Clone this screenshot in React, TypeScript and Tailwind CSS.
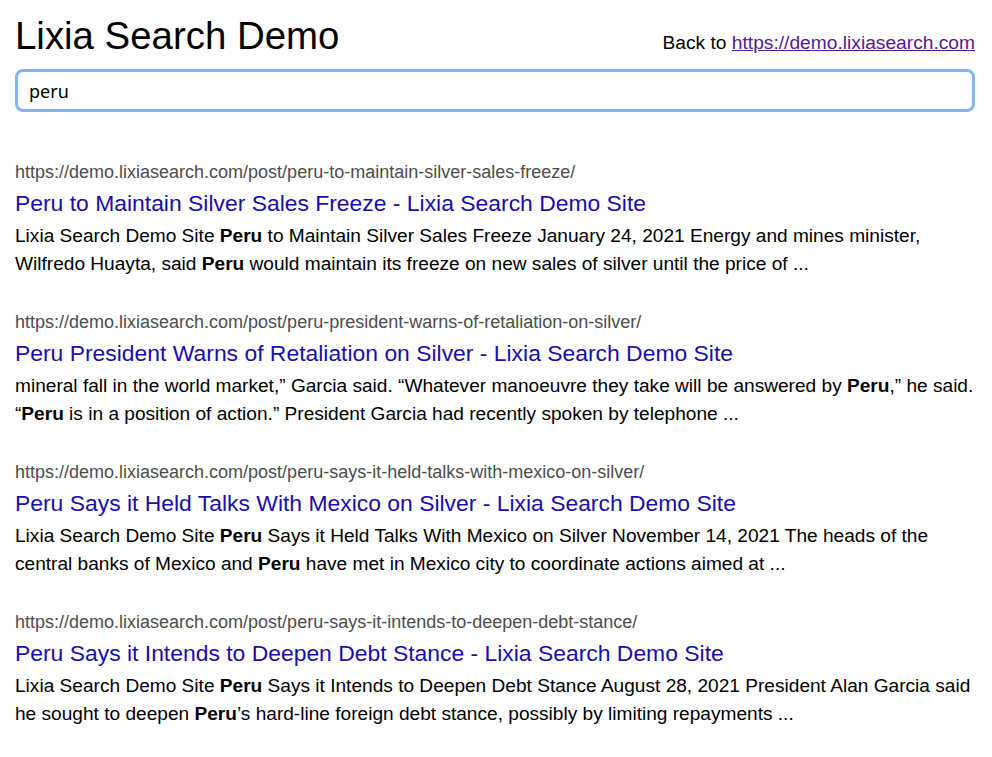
const results = [
  {
    url: "https://demo.lixiasearch.com/post/peru-to-maintain-silver-sales-freeze/",
    title: "Peru to Maintain Silver Sales Freeze - Lixia Search Demo Site",
    snippet: [
      "Lixia Search Demo Site ",
      { b: "Peru" },
      " to Maintain Silver Sales Freeze January 24, 2021 Energy and mines minister, Wilfredo Huayta, said ",
      { b: "Peru" },
      " would maintain its freeze on new sales of silver until the price of ...",
    ],
  },
  {
    url: "https://demo.lixiasearch.com/post/peru-president-warns-of-retaliation-on-silver/",
    title: "Peru President Warns of Retaliation on Silver - Lixia Search Demo Site",
    snippet: [
      "mineral fall in the world market,\u201d Garcia said. \u201cWhatever manoeuvre they take will be answered by ",
      { b: "Peru" },
      ",\u201d he said. \u201c",
      { b: "Peru" },
      " is in a position of action.\u201d President Garcia had recently spoken by telephone ...",
    ],
  },
  {
    url: "https://demo.lixiasearch.com/post/peru-says-it-held-talks-with-mexico-on-silver/",
    title: "Peru Says it Held Talks With Mexico on Silver - Lixia Search Demo Site",
    snippet: [
      "Lixia Search Demo Site ",
      { b: "Peru" },
      " Says it Held Talks With Mexico on Silver November 14, 2021 The heads of the central banks of Mexico and ",
      { b: "Peru" },
      " have met in Mexico city to coordinate actions aimed at ...",
    ],
  },
  {
    url: "https://demo.lixiasearch.com/post/peru-says-it-intends-to-deepen-debt-stance/",
    title: "Peru Says it Intends to Deepen Debt Stance - Lixia Search Demo Site",
    snippet: [
      "Lixia Search Demo Site ",
      { b: "Peru" },
      " Says it Intends to Deepen Debt Stance August 28, 2021 President Alan Garcia said he sought to deepen ",
      { b: "Peru" },
      "\u2019s hard-line foreign debt stance, possibly by limiting repayments ...",
    ],
  },
];

type Part = string | { b: string };

function Snippet({ parts }: { parts: Part[] }) {
  return (
    <p className="text-[19.1px] leading-[28px] text-black">
      {parts.map((p, i) => (typeof p === "string" ? <span key={i}>{p}</span> : <b key={i}>{p.b}</b>))}
    </p>
  );
}

export default function App() {
  return (
    <div className="min-h-screen bg-white pl-[15px] pr-[17px] font-['Liberation_Sans',Arial,sans-serif] text-black">
      <header className="flex items-end justify-between pt-[13px]">
        <h1 className="text-[38.4px] leading-[46px]">Lixia Search Demo</h1>
        <p className="pb-[4px] text-[19.2px] leading-[24px]">
          Back to{" "}
          <a href="https://demo.lixiasearch.com" className="text-[#551a8b] underline">
            https://demo.lixiasearch.com
          </a>
        </p>
      </header>

      <input
        type="text"
        defaultValue="peru"
        className="mt-[10px] block h-[43px] w-full rounded-[8px] border-[3px] border-[#84b4fa] px-[11px] font-['Noto_Sans',sans-serif] text-[18px] text-black outline-none"
      />

      <div className="mt-[47px] flex flex-col gap-[31px]">
        {results.map((r) => (
          <div key={r.url}>
            <div className="text-[18px] leading-[26px] text-[#4d4d4d]">{r.url}</div>
            <a href={r.url} className="block text-[22.9px] leading-[37px] text-[#1a0dab]">
              {r.title}
            </a>
            <Snippet parts={r.snippet as Part[]} />
          </div>
        ))}
      </div>
    </div>
  );
}
